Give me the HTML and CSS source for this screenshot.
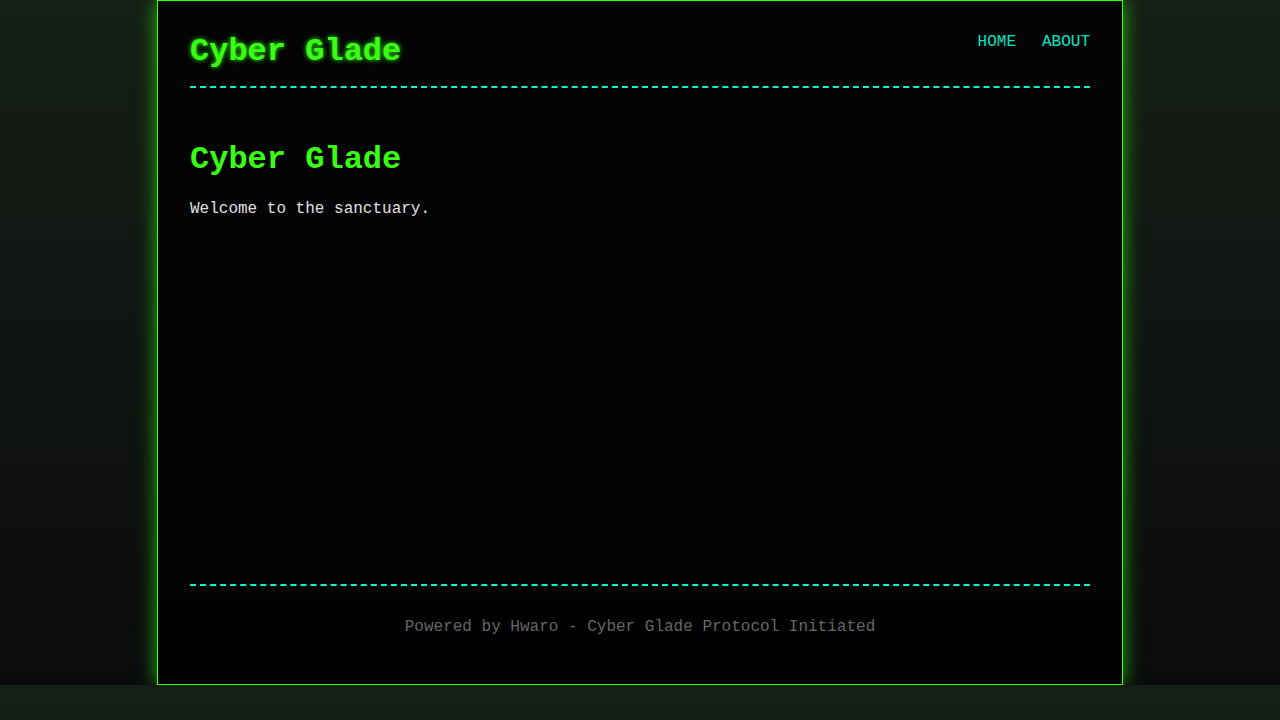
FILE: index.html
```html
<!DOCTYPE html>
<html lang="en">
<head>
    <meta charset="UTF-8">
    <meta name="viewport" content="width=device-width, initial-scale=1.0">
    <title>Cyber Glade</title>
    <link rel="stylesheet" href="styles.css">
</head>
<body>
    <div class="container">
        <header class="site-header">
            <a class="site-title" href="#">Cyber Glade</a>
            <nav class="site-nav">
                <a href="#">HOME</a>
                <a href="#">ABOUT</a>
            </nav>
        </header>

        <main class="content">
            <h1>Cyber Glade</h1>
            <p>Welcome to the sanctuary.</p>
        </main>

        <footer class="site-footer">
            <p>Powered by Hwaro - Cyber Glade Protocol Initiated</p>
        </footer>
    </div>
</body>
</html>
```

FILE: styles.css
```css
body {
    margin: 0;
    font-family: "Liberation Mono", "Courier New", monospace;
    font-size: 16px;
    color: #e0e0e0;
    background: linear-gradient(to bottom, #151f16, #0b0b0d);
}
.container {
    max-width: 900px;
    margin: 0 auto;
    padding: 32px;
    background-color: rgba(0, 0, 0, 0.85);
    border: 1px solid #39ff14;
    box-shadow: 0 0 18px rgba(57, 255, 20, 0.65);
}
.site-header {
    display: flex;
    justify-content: space-between;
    align-items: flex-start;
    padding-bottom: 16px;
    border-bottom: 2px dashed #00ffcc;
    margin-bottom: 32px;
}
.site-title {
    font-size: 32px;
    font-weight: bold;
    color: #39ff14;
    text-decoration: none;
    text-shadow: 0 0 5px #39ff14;
}
.site-nav {
    display: flex;
    gap: 26px;
}
.site-nav a {
    color: #00e6c3;
    text-decoration: none;
}
.site-nav a:hover {
    text-decoration: underline;
}
.content {
    display: flow-root;
    min-height: 60vh;
}
.content h1 {
    font-size: 32px;
    color: #39ff14;
    margin: 0.67em 0;
}
.content p {
    margin: 1em 0;
}
.site-footer {
    margin-top: 32px;
    padding: 32px 0 16px;
    border-top: 2px dashed #00ffcc;
    text-align: center;
    color: #666;
}
.site-footer p {
    margin: 0;
}
```
